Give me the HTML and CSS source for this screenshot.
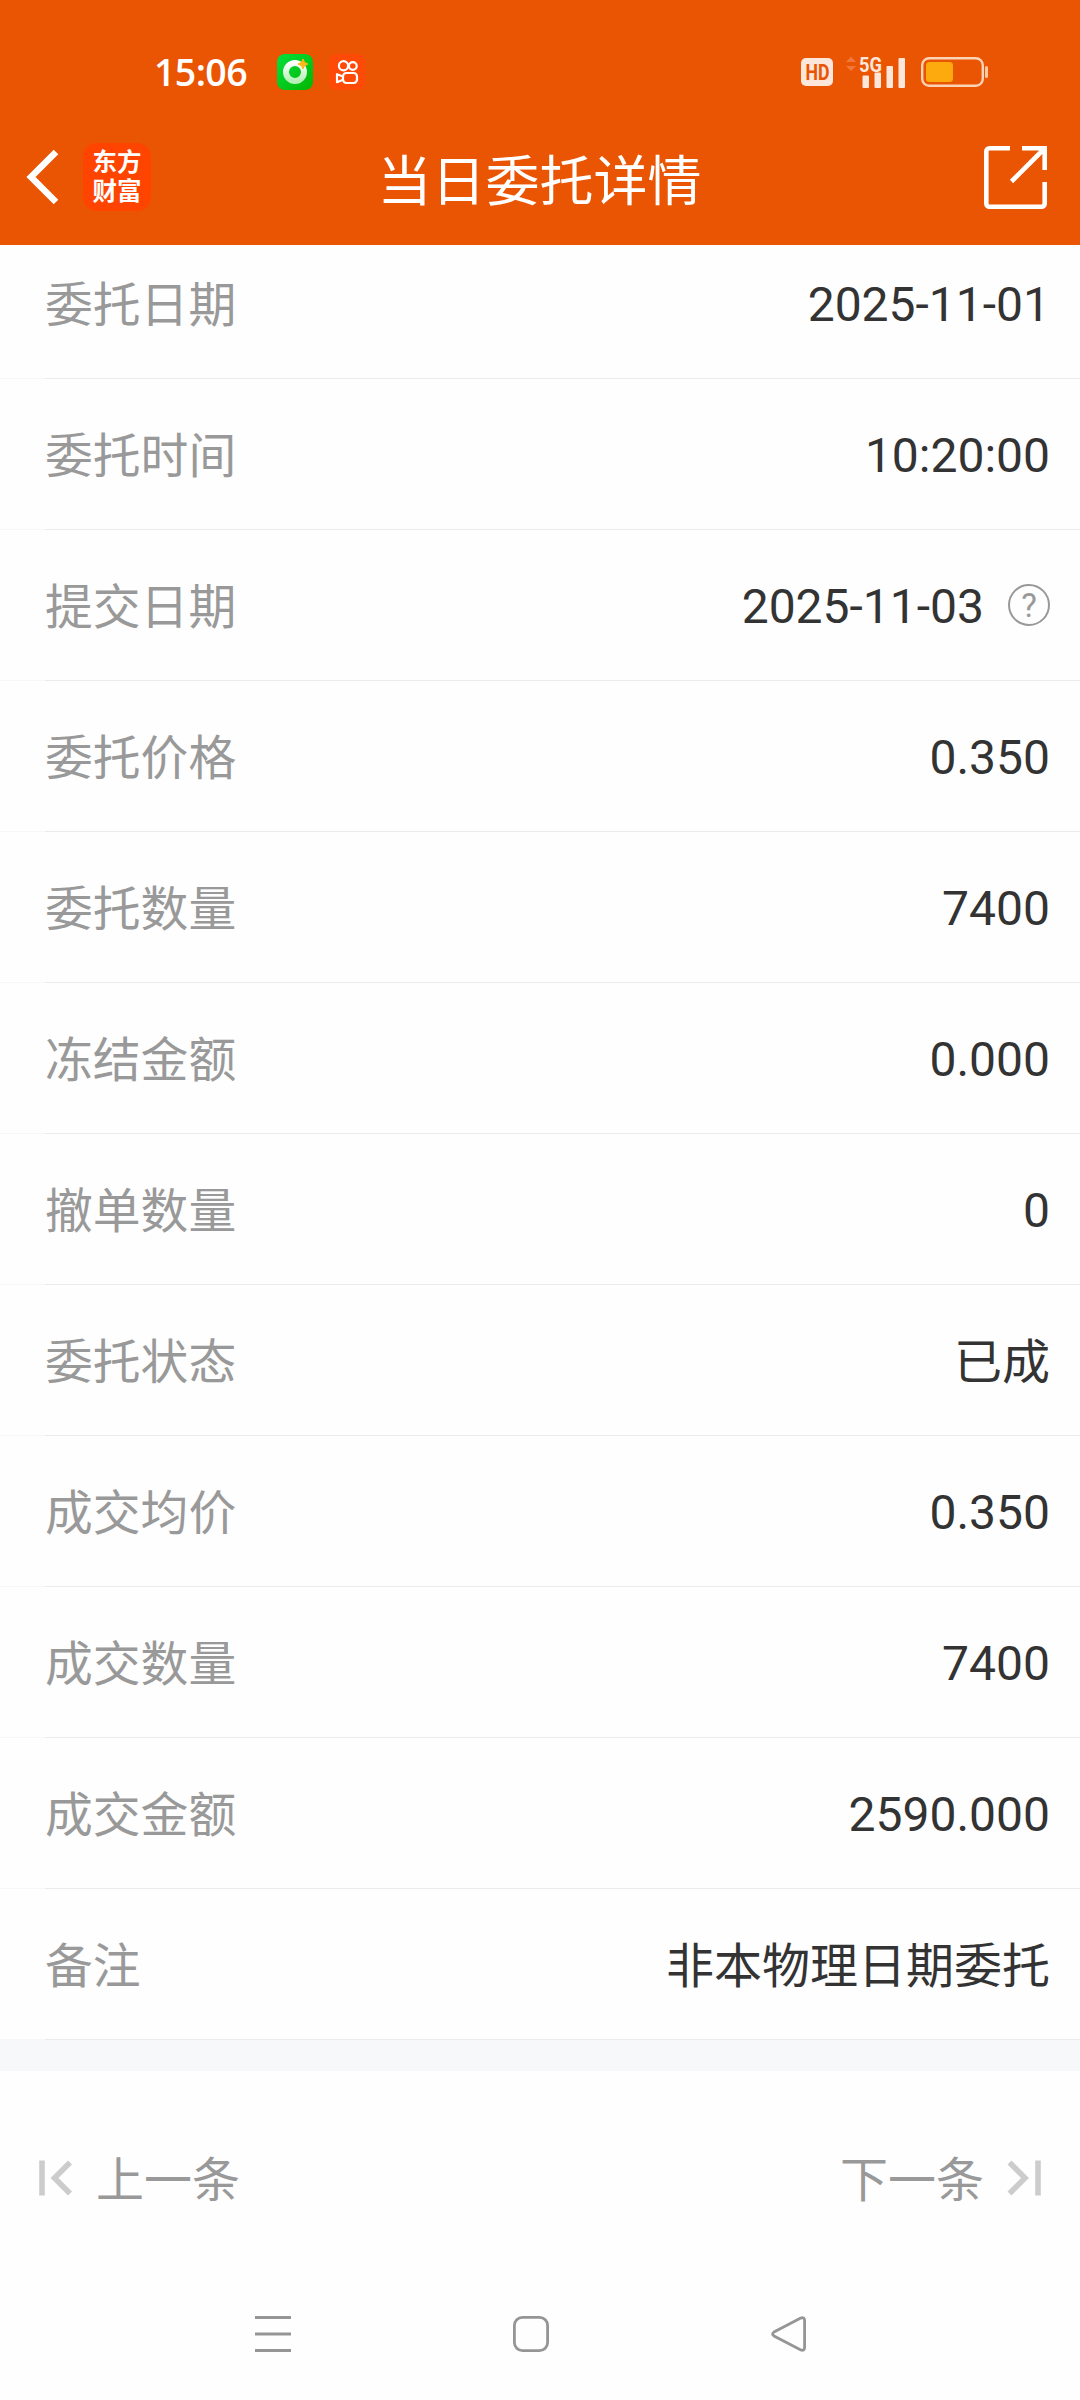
FILE: index.html
```html
<!DOCTYPE html>
<html lang="zh-CN">
<head>
    <meta charset="UTF-8">
    <meta name="viewport" content="width=device-width, initial-scale=1.0">
    <title>当日委托详情</title>
    <link rel="stylesheet" href="styles.css">
</head>
<body>
    <header class="header">
        <div class="status-bar">
            <span class="time">15:06</span>
            <svg class="app-icon" width="36" height="36" viewBox="0 0 36 36">
                <defs>
                    <linearGradient id="green" x1="0" y1="0" x2="1" y2="1">
                        <stop offset="0" stop-color="#04e03c"/>
                        <stop offset="1" stop-color="#02b500"/>
                    </linearGradient>
                    <linearGradient id="ring" x1="0" y1="0" x2="0" y2="1">
                        <stop offset="0" stop-color="#ffffff"/>
                        <stop offset="1" stop-color="#b5f0b5"/>
                    </linearGradient>
                </defs>
                <rect width="36" height="36" rx="8" fill="url(#green)"/>
                <circle cx="18" cy="18" r="9" fill="none" stroke="url(#ring)" stroke-width="6"/>
                <path d="M26 5l1.600 3.400L31 10l-3.400 1.600L26 15l-1.600-3.400L21 10l3.400-1.600z" fill="#fdb813" stroke="#fdb813"/>
            </svg>
            <svg class="app-icon" width="36" height="36" viewBox="0 0 36 36">
                <rect width="36" height="36" rx="8" fill="#ff4906"/>
                <g fill="none" stroke="#fff" stroke-width="2.200" stroke-linejoin="round">
                    <circle cx="14.500" cy="11.700" r="4.600"/>
                    <circle cx="23.800" cy="12" r="3.900"/>
                    <rect x="14" y="19" width="14" height="10" rx="3.400"/>
                    <path d="M14 22.500l-6-2.300v8l6-2.500"/>
                </g>
            </svg>
            <div class="status-right">
                <svg class="hd" width="32" height="28" viewBox="0 0 32 28">
                    <rect width="32" height="28" rx="5" fill="#fde6da"/>
                    <text x="4.500" y="22" class="hd-text" textLength="24" lengthAdjust="spacingAndGlyphs">HD</text>
                </svg>
                <svg class="signal" width="60" height="34" viewBox="0 0 60 34">
                    <path d="M0 7l5-5.500 5 5.500zM0 11l5 5 5-5z" fill="#f2773a"/>
                    <text x="13" y="16.500" class="net-text" textLength="23" lengthAdjust="spacingAndGlyphs">5G</text>
                    <g fill="#fde6da">
                        <rect x="16.500" y="20.500" width="6.500" height="12.500" rx="1"/>
                        <rect x="28.500" y="17.500" width="6.500" height="15.500" rx="1"/>
                        <rect x="40.500" y="11" width="6.500" height="22" rx="1"/>
                        <rect x="52.500" y="3" width="6.500" height="30" rx="1"/>
                    </g>
                </svg>
                <svg class="battery" width="67" height="30" viewBox="0 0 67 30">
                    <rect x="1.200" y="1.200" width="60.600" height="27.600" rx="7" fill="none" stroke="#fbd3b5" stroke-width="2.400"/>
                    <rect x="5" y="5" width="27" height="20" rx="3.500" fill="#fcaa0d"/>
                    <rect x="64" y="9" width="3" height="12" rx="1.500" fill="#fbc9a4"/>
                </svg>
            </div>
        </div>
        <div class="title-bar">
            <div class="title-left">
                <svg width="33" height="56" viewBox="0 0 33 56">
                    <path d="M30 3L5 28l25 25" fill="none" stroke="#fff" stroke-width="6.500"/>
                </svg>
                <div class="logo">
                    <span>东方</span>
                    <span>财富</span>
                </div>
            </div>
            <h1 class="title">当日委托详情</h1>
            <svg class="share" width="63" height="63" viewBox="0 0 63 63">
                <g fill="none" stroke="#fff" stroke-width="4.600">
                    <path d="M26 2.300H5.500a3.200 3.200 0 0 0-3.200 3.200v52a3.200 3.200 0 0 0 3.200 3.200h52a3.200 3.200 0 0 0 3.200-3.200V36"/>
                    <path d="M38 2.300h22.700V24M60 3L27.500 35.500"/>
                </g>
            </svg>
        </div>
    </header>

    <main class="detail-list">
        <div class="row"><span class="label">委托日期</span><span class="value">2025-11-01</span></div>
        <div class="row"><span class="label">委托时间</span><span class="value">10:20:00</span></div>
        <div class="row">
            <span class="label">提交日期</span>
            <span class="value">2025-11-03</span>
            <span class="help">?</span>
        </div>
        <div class="row"><span class="label">委托价格</span><span class="value">0.350</span></div>
        <div class="row"><span class="label">委托数量</span><span class="value">7400</span></div>
        <div class="row"><span class="label">冻结金额</span><span class="value">0.000</span></div>
        <div class="row"><span class="label">撤单数量</span><span class="value">0</span></div>
        <div class="row"><span class="label">委托状态</span><span class="value cn">已成</span></div>
        <div class="row"><span class="label">成交均价</span><span class="value">0.350</span></div>
        <div class="row"><span class="label">成交数量</span><span class="value">7400</span></div>
        <div class="row"><span class="label">成交金额</span><span class="value">2590.000</span></div>
        <div class="row"><span class="label">备注</span><span class="value cn">非本物理日期委托</span></div>
    </main>

    <div class="divider"></div>

    <div class="pager">
        <div class="pager-item">
            <svg width="34" height="36" viewBox="0 0 34 36">
                <path d="M3 .5v35M31 2.500L15.500 18 31 33.500" fill="none" stroke="#ccc" stroke-width="5.600"/>
            </svg>
            <span>上一条</span>
        </div>
        <div class="pager-item">
            <span>下一条</span>
            <svg width="34" height="36" viewBox="0 0 34 36">
                <path d="M31 .5v35M2.500 2.500L18 18 2.500 33.500" fill="none" stroke="#ccc" stroke-width="5.600"/>
            </svg>
        </div>
    </div>

    <nav class="system-nav">
        <svg width="36" height="36" viewBox="0 0 36 36">
            <path d="M0 1.500h36M0 18h36M0 34.500h36" stroke="#959595" stroke-width="3"/>
        </svg>
        <svg width="36" height="36" viewBox="0 0 36 36">
            <rect x="1.400" y="1.400" width="33.200" height="33.200" rx="8" fill="none" stroke="#959595" stroke-width="2.800"/>
        </svg>
        <svg width="36" height="36" viewBox="0 0 36 36">
            <path d="M29.800 2L3 16Q.3 18 3 20L29.800 34Q33.300 35 33.600 31.800V4.200Q33.300 1 29.800 2z" fill="none" stroke="#959595" stroke-width="2.800"/>
        </svg>
    </nav>
</body>
</html>
```
FILE: styles.css
```css
/* Basic reset and body styling */
* {
    box-sizing: border-box;
}

body {
    margin: 0;
    background-color: #fefefe;
    font-family: 'Roboto', 'Noto Sans CJK SC', sans-serif;
    font-size: 48px;
    color: #333333;
}

svg {
    display: block;
    flex-shrink: 0;
    overflow: visible;
}

/* Orange header, stays above the scrolled list */
.header {
    position: relative;
    z-index: 1;
    height: 245px;
    background-color: #ea5504;
    color: #ffffff;
}

.status-bar {
    display: flex;
    align-items: center;
    height: 96px;
    padding: 48px 92px 0 154px;
}

.time {
    width: 107px;
    font-family: 'Open Sans', sans-serif;
    font-size: 37.5px;
    font-weight: 600;
    letter-spacing: -0.6px;
    line-height: 48px;
}

.app-icon {
    margin-left: 16px;
}

.status-right {
    display: flex;
    align-items: center;
    margin-left: auto;
}

.signal {
    margin: 0 15px 0 13px;
}

.hd-text,
.net-text {
    font-family: 'Roboto', sans-serif;
    font-weight: 700;
}

.hd-text {
    font-size: 22px;
    fill: #ea5504;
}

.net-text {
    font-size: 21px;
    fill: #fde6da;
}

.title-bar {
    display: grid;
    grid-template-columns: 1fr auto 1fr;
    align-items: center;
    height: 149px;
    padding: 13px 33px 0 26px;
}

.title-left {
    display: flex;
    align-items: center;
    gap: 24px;
}

.logo {
    display: flex;
    flex-direction: column;
    align-items: center;
    width: 68px;
    height: 68px;
    padding-top: 3px;
    border-radius: 14px;
    background-color: #ff4400;
    font-family: 'Noto Sans CJK SC', sans-serif;
    font-size: 24.5px;
    font-weight: 700;
    line-height: 29px;
}

.title {
    margin: 0;
    padding: 2px 0 0 6px;
    font-family: 'Noto Sans CJK SC', sans-serif;
    font-size: 54px;
    font-weight: 400;
    line-height: 80px;
}

.share {
    justify-self: end;
}

/* Detail rows, list is scrolled a little under the header */
.detail-list {
    margin-top: -17px;
}

.row {
    display: flex;
    align-items: center;
    height: 151px;
    padding: 0 30px 0 45px;
    background: linear-gradient(to right, #f7f7f7 45px, #ebebeb 45px) bottom / 100% 1px no-repeat;
}

.label {
    padding-bottom: 3px;
    font-family: 'Noto Sans CJK SC', sans-serif;
    font-size: 47.8px;
    line-height: 72px;
    color: #999999;
}

.value {
    margin-left: auto;
    padding-top: 2px;
    line-height: 72px;
}

.value.cn {
    padding: 0 0 5px;
    font-family: 'Noto Sans CJK SC', sans-serif;
}

.help {
    width: 42px;
    height: 42px;
    margin: 0 0 2px 24px;
    border: 2px solid #999999;
    border-radius: 50%;
    font-size: 33px;
    line-height: 39px;
    text-align: center;
    color: #999999;
}

.divider {
    height: 31px;
    background-color: #f7f8fa;
}

/* Previous / next order */
.pager {
    display: flex;
    justify-content: space-between;
    align-items: center;
    height: 214px;
    padding: 0 39px;
    font-family: 'Noto Sans CJK SC', sans-serif;
    line-height: 72px;
    color: #999999;
}

.pager-item {
    display: flex;
    align-items: center;
    gap: 23px;
}

.pager-item span {
    padding-bottom: 4px;
}

/* Android navigation keys */
.system-nav {
    display: flex;
    justify-content: center;
    align-items: center;
    gap: 222px;
    height: 98px;
    padding-right: 18px;
}
```
